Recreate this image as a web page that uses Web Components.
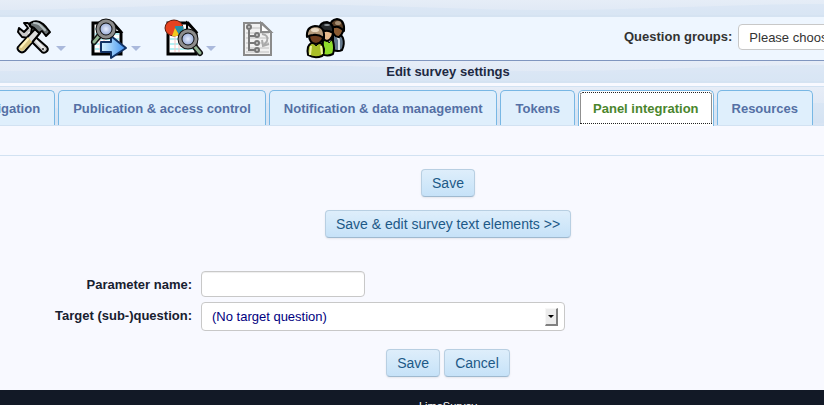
<!DOCTYPE html>
<html lang="en">
<head>
<meta charset="utf-8">
<meta name="viewport" content="width=device-width, initial-scale=1">
<title>LimeSurvey</title>
<style>
  html { height: 100%; }
  body {
    --wave: url("data:image/svg+xml,%3Csvg xmlns='http://www.w3.org/2000/svg' width='560' height='24'%3E%3Cpath d='M0 10C100 10 170 4 280 4S460 10 560 10V24H0Z' fill='%23cfe2f2' fill-opacity='.4'/%3E%3C/svg%3E");
    --center-shift: 72px;
    min-height: 100%;
    margin: 0;
    display: flex;
    flex-direction: column;
    overflow: hidden;
    background: #f8f9ff;
    color: #17202f;
    font: 13px/16px "Liberation Sans", Arial, sans-serif;
  }
</style>
</head>
<body>
  <ls-wave-bar></ls-wave-bar>
  <ls-toolbar>
    <ls-tool name="tools" label="Survey properties" menu></ls-tool>
    <ls-tool name="preview" label="Execute survey" menu></ls-tool>
    <ls-tool name="stats" label="Responses" menu></ls-tool>
    <ls-tool name="logic" label="Survey logic"></ls-tool>
    <ls-tool name="people" label="Participants"></ls-tool>
    <ls-group-picker slot="end"></ls-group-picker>
  </ls-toolbar>
  <ls-wave-bar heading>Edit survey settings</ls-wave-bar>
  <ls-tabs>
    <ls-tab>Presentation &amp; navigation</ls-tab>
    <ls-tab>Publication &amp; access control</ls-tab>
    <ls-tab>Notification &amp; data management</ls-tab>
    <ls-tab>Tokens</ls-tab>
    <ls-tab active>Panel integration</ls-tab>
    <ls-tab>Resources</ls-tab>
  </ls-tabs>
  <ls-actions stacked>
    <ls-button>Save</ls-button>
    <ls-button>Save &amp; edit survey text elements &gt;&gt;</ls-button>
  </ls-actions>
  <ls-param-form></ls-param-form>
  <ls-actions>
    <ls-button>Save</ls-button>
    <ls-button>Cancel</ls-button>
  </ls-actions>
  <ls-footer>LimeSurvey</ls-footer>

<script>
  const sheet = '<path d="M3 5h20l8 9v22H3z" fill="#fff" stroke="#000" stroke-width="3"/>' +
    '<path d="M5 11h18M5 16h24M5 21h24M5 26h24M5 31h24" stroke="#b5f0f4" stroke-width="2"/>' +
    '<path d="M10 7v27M14 7v27" stroke="#f9c4c4" stroke-width="1"/>' +
    '<path d="M22 5v9h9z" fill="#e4e4e4" stroke="#000" stroke-width="2"/>';

  const icons = {
    tools: `
      <g transform="translate(1 1)" stroke-linejoin="round" stroke-linecap="round">
        <path d="M8 4l4 0 4 5-1 5 16 14q2 3-1 5t-5-1L12 19l-6-1-4-5 1-4 5 4 4-4z" fill="#c9c9c9" stroke="#000" stroke-width="2"/>
        <path d="M13 14l15 16" stroke="#eee" stroke-width="2"/>
        <circle cx="27" cy="30" r="1" fill="#222"/>
        <path d="M19 10l5 4L9 32q-3 3-6 0t0-5z" fill="#ddd" stroke="#000" stroke-width="2"/>
        <path d="M12 18l4 5-8 8q-2 2-4 0t0-4z" fill="#d9c683"/>
        <path d="M12 20l-7 8" stroke="#fff2bb" stroke-width="2"/>
        <path d="M14 4q7-4 13 1l3 3 4 5-4 4-4-5-3 2-5-5-4-2z" fill="#6a7274" stroke="#000" stroke-width="2"/>
        <path d="M18 4q5 0 7 3l4 4" fill="none" stroke="#b5bfc1" stroke-width="2"/>
      </g>`,
    preview: `${sheet}
      <path d="M11 24h10v-6l15 12-15 10v-6H11z" fill="url(#arrow)" stroke="#123264" stroke-width="2" stroke-linejoin="round"/>
      <path d="M9 18l-5 6" stroke="#111" stroke-width="6" stroke-linecap="round"/>
      <path d="M9 18l-5 6" stroke="#91b391" stroke-width="3" stroke-linecap="round"/>
      <circle cx="16" cy="11" r="8" fill="url(#lens)" stroke="#111" stroke-width="5"/>
      <circle cx="16" cy="11" r="8" fill="none" stroke="#8c8c8c" stroke-width="3"/>`,
    stats: `${sheet}
      <ellipse cx="9" cy="10" rx="9" ry="8" fill="#e64320" stroke="#5d1b0c"/>
      <path d="M10 10V8l8 0q1 6-4 9z" fill="#268fa8"/><path d="M10 10l4 7q-3 2-7 1z" fill="#f1c91d"/>
      <path d="M30 29l5 6" stroke="#111" stroke-width="6" stroke-linecap="round"/>
      <path d="M30 29l5 6" stroke="#91b391" stroke-width="3" stroke-linecap="round"/>
      <circle cx="23" cy="21" r="8" fill="url(#lens)" stroke="#111" stroke-width="5"/>
      <circle cx="23" cy="21" r="8" fill="none" stroke="#8c8c8c" stroke-width="3"/>`,
    logic: `
      <g transform="translate(0 2)">
        <path d="M4 3h18l9 9v23H4z" fill="#f1f1f1" stroke="#8b8b8b" stroke-width="2"/>
        <path d="M6 8h14M6 13h23M6 18h23M6 23h23M6 28h23M6 32h23" stroke="#d8d8d8" stroke-width="2"/>
        <path d="M21 3v9h10z" fill="#fff" stroke="#8b8b8b" stroke-width="2"/>
        <path d="M9 10v20h6M9 16h6M9 23h6" fill="none" stroke="#777" stroke-width="2"/>
        <g fill="#ccc" stroke="#777" stroke-width="2"><circle cx="9" cy="7" r="2"/><circle cx="17" cy="15" r="2"/><circle cx="17" cy="23" r="2"/><circle cx="17" cy="30" r="2"/></g>
        <path d="M22 14q7 1 5 7l-3 4M22 20l1 6 6-2" fill="none" stroke="#aaa" stroke-width="2"/>
      </g>`,
    people: `
      <g transform="translate(2 1)">
        <g stroke="#000" stroke-width="2" stroke-linejoin="round">
          <path d="M26 16q8-2 10 3 2 6-1 12-4 2-9 0z" fill="#64788c"/>
          <path d="M30 17l2 4v10" fill="none" stroke="#dce7ef"/>
          <path d="M24 8q3 11 8 10 6-5 4-12z" fill="#8a5a32"/>
          <path d="M23 8q0-7 7-8 8 1 7 12-5-5-9-4z" fill="#5c4028"/>
          <path d="M16 22q6-5 10 0 2 7 0 13-6 3-11 0z" fill="#8fdd2b"/>
          <path d="M20 20l2 4 3-4z" fill="#fff" stroke-width="1"/>
          <path d="M15 12q0 9 5 10 7-2 6-12z" fill="#e7b98c"/>
          <path d="M12 10q1-7 8-7 7 1 6 11-5-3-8-2z" fill="#25282a"/>
          <path d="M1 28q2-5 8-5 7 0 8 7 0 6-2 7-7 3-14-1-1-4 0-8z" fill="#a9be28"/>
          <path d="M4 27l-1 9M14 27l1 8" fill="none" stroke="#eef3a5" stroke-width="2"/>
          <path d="M6 23l3 4 4-4z" fill="#fff" stroke-width="1"/>
          <path d="M2 16q0 8 7 9 8-1 7-10z" fill="#6e3c1d"/>
          <path d="M0 18q-1-10 8-11 10 0 9 12-6-4-11-3-3 0-6 2z" fill="#b59a7b"/>
        </g>
        <ellipse cx="8" cy="11" rx="4" ry="2" fill="#ead9c2"/>
        <ellipse cx="20" cy="6" rx="3" ry="1" fill="#90989c"/>
        <ellipse cx="31" cy="4" rx="3" ry="2" fill="#a58d72"/>
      </g>`
  };

  class LsElement extends HTMLElement {
    constructor() {
      super();
      this.attachShadow({ mode: 'open' });
    }

    connectedCallback() {
      this.shadowRoot.innerHTML = this.render();
    }
  }

  customElements.define('ls-wave-bar', class extends LsElement {
    render() {
      return `
        <style>
          :host {
            display: block;
            box-sizing: border-box;
            min-height: 17px;
            background: var(--wave) -10px 0 repeat-x, linear-gradient(#e6edf7, #dee8f5);
            border-bottom: 2px solid #d5e3f2;
          }
          :host([heading]) {
            min-height: 22px;
            padding-left: var(--center-shift);
          }
          h1 { margin: 0; padding: 3px 0 1px; font-size: 13px; line-height: 16px; text-align: center; color: #1d2942; }
        </style>
        ${this.hasAttribute('heading') ? '<h1><slot></slot></h1>' : ''}
      `;
    }
  });

  customElements.define('ls-toolbar', class extends LsElement {
    render() {
      return `
        <style>
          :host {
            display: flex;
            justify-content: space-between;
            height: 43px;
            background: #eef6ff;
            border-bottom: 1px solid #8096bf;
          }
          nav { display: flex; padding-left: 15px; }
        </style>
        <nav><slot></slot></nav>
        <slot name="end"></slot>
      `;
    }
  });

  customElements.define('ls-tool', class extends LsElement {
    render() {
      return `
        <style>
          :host { display: block; flex: none; width: 75px; }
          :host(:not([menu])) { width: 65px; }
          button { display: flex; align-items: flex-start; gap: 2px; padding: 1px 0 0; border: 0; background: none; }
          svg { flex: none; overflow: visible; }
          i { margin-top: 28px; border: 5px solid transparent; border-top-color: #aab9dc; border-bottom: 0; }
        </style>
        <button type="button" aria-label="${this.getAttribute('label')}">
          <svg width="39" height="40" viewBox="0 0 39 40">
            <defs>
              <linearGradient id="arrow" x2="1" y2="0"><stop stop-color="#d8f4ff"/><stop offset="1" stop-color="#3d8ff0"/></linearGradient>
              <radialGradient id="lens"><stop stop-color="#e6edff"/><stop offset="1" stop-color="#8197c9"/></radialGradient>
            </defs>
            ${icons[this.getAttribute('name')]}
          </svg>
          ${this.hasAttribute('menu') ? '<i></i>' : ''}
        </button>
      `;
    }
  });

  customElements.define('ls-group-picker', class extends LsElement {
    render() {
      return `
        <style>
          :host { display: flex; align-items: flex-start; flex: none; width: 200px; gap: 6px; padding-top: 7px; color: #333; }
          label { flex: none; padding-top: 5px; font-weight: bold; font-size: 13px; line-height: 16px; }
          select {
            flex: none;
            width: 160px;
            height: 26px;
            padding: 2px 10px 0;
            appearance: none;
            border: 1px solid #c8c8c8;
            border-radius: 4px;
            background: #fff;
            color: #333;
            font: inherit;
          }
        </style>
        <label for="group">Question groups:</label>
        <select id="group"><option>Please choose...</option></select>
      `;
    }
  });

  customElements.define('ls-tabs', class extends LsElement {
    render() {
      return `
        <style>
          :host {
            display: block;
            margin-top: 3px;
            padding-bottom: 29px;
            border-bottom: 1px solid #d2e2f2;
          }
          nav {
            display: flex;
            justify-content: flex-end;
            gap: 3px;
            padding: 3px 11px 0 0;
            border-top: 1px solid #d2e2f2;
            border-bottom: 1px solid #d2e2f2;
            background: var(--wave) -10px 12px repeat-x, linear-gradient(#e7edf7, #d8e4f3);
          }
        </style>
        <nav><slot></slot></nav>
      `;
    }
  });

  customElements.define('ls-tab', class extends LsElement {
    render() {
      return `
        <style>
          :host { display: block; flex: none; }
          a {
            display: block;
            padding: 10px 14px 8px;
            border: 1px solid #78b7e4;
            border-bottom: 0;
            border-radius: 5px 5px 0 0;
            background: #dfeffc;
            color: #5470a5;
            font-weight: bold;
            font-size: 13px;
            line-height: 16px;
            text-decoration: none;
            white-space: nowrap;
          }
          :host([active]) { margin-bottom: -1px; }
          :host([active]) a {
            padding-bottom: 9px;
            background: #fff;
            color: #4a862c;
            outline: 1px dotted #222;
            outline-offset: -3px;
          }
        </style>
        <a href="#"><slot></slot></a>
      `;
    }
  });

  customElements.define('ls-actions', class extends LsElement {
    render() {
      return `
        <style>
          :host { display: flex; justify-content: center; gap: 4px; padding: 18px 0 13px var(--center-shift); }
          :host([stacked]) { flex-direction: column; align-items: center; gap: 13px; padding: 13px 0 0 var(--center-shift); }
        </style>
        <slot></slot>
      `;
    }
  });

  customElements.define('ls-button', class extends LsElement {
    render() {
      return `
        <style>
          :host { display: block; }
          button {
            display: block;
            padding: 5px 10px;
            border: 1px solid #b8cfe2;
            border-bottom-color: #9fb9cf;
            border-radius: 4px;
            background: linear-gradient(#deeefb, #c6e2f8);
            box-shadow: 0 1px 2px rgb(0 0 0 / 0.08);
            color: #1d5987;
            font: 14px/16px "Liberation Sans", Arial, sans-serif;
          }
        </style>
        <button type="button"><slot></slot></button>
      `;
    }
  });

  customElements.define('ls-param-form', class extends LsElement {
    render() {
      return `
        <style>
          :host { display: block; padding-top: 33px; }
          form { display: grid; grid-template-columns: 192px minmax(0, 364px); gap: 5px 9px; }
          label { padding-top: 6px; text-align: right; font-weight: bold; font-size: 13px; line-height: 16px; }
          input, select {
            box-sizing: border-box;
            margin: 0;
            border: 1px solid #c8c8c8;
            border-radius: 4px;
            background: #fff;
            font: inherit;
          }
          input { width: 164px; height: 26px; padding: 0 10px; box-shadow: inset 0 1px 1px rgb(0 0 0 / 0.07); }
          .pick { position: relative; }
          select { display: block; width: 100%; height: 29px; padding: 1px 10px 0; appearance: none; color: #000080; }
          .arrow {
            position: absolute;
            top: 6px;
            right: 7px;
            box-sizing: border-box;
            display: grid;
            place-content: center;
            width: 13px;
            height: 18px;
            background: #ececec;
            border: 1px solid #f7f7f7;
            border-right: 2px solid #808080;
            border-bottom: 2px solid #808080;
            pointer-events: none;
          }
          .arrow::before { content: ""; border: 3px solid transparent; border-top-color: #000; border-bottom: 0; }
        </style>
        <form>
          <label for="param">Parameter name:</label>
          <input id="param" type="text">
          <label for="target">Target (sub-)question:</label>
          <div class="pick">
            <select id="target"><option>(No target question)</option></select>
            <span class="arrow"></span>
          </div>
        </form>
      `;
    }
  });

  customElements.define('ls-footer', class extends LsElement {
    render() {
      return `
        <style>
          :host {
            display: block;
            flex: 1 0 auto;
            padding: 10px 0 8px var(--center-shift);
            background: #121926;
            color: #fff;
            font-size: 11px;
            line-height: 13px;
            text-align: center;
          }
        </style>
        <slot></slot>
      `;
    }
  });
</script>
</body>
</html>
